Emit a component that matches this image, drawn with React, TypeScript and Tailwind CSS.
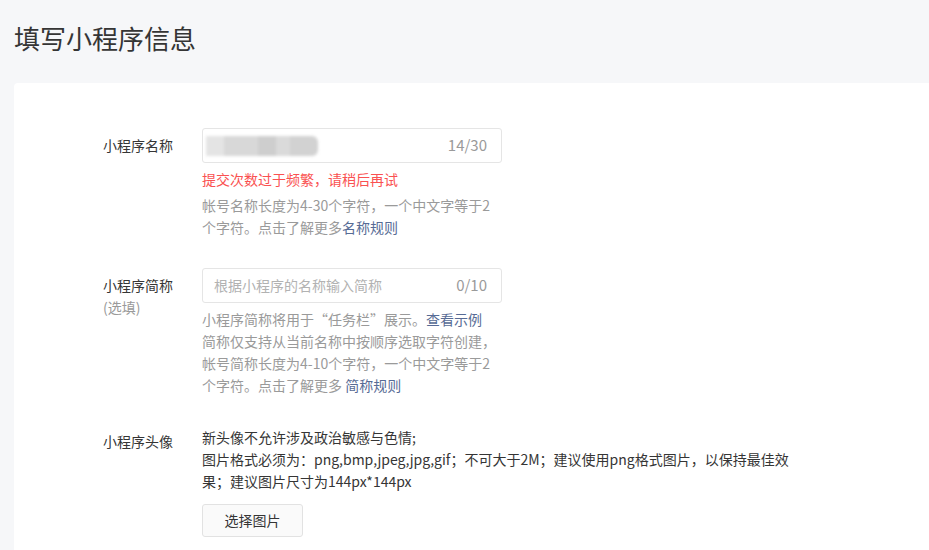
import React from "react";

const font = { fontFamily: '"Noto Sans CJK SC", "Noto Sans", sans-serif' };

const Link = ({ children }: { children: React.ReactNode }) => (
  <a className="text-[#576b95] cursor-pointer">{children}</a>
);

export default function App() {
  return (
    <div
      className="min-h-[550px] h-[550px] overflow-hidden bg-[#f6f7f9] text-[#353535]"
      style={font}
    >
      <h1 className="pl-[14px] pt-[21px] text-[26px] leading-[34px] font-normal text-[#353535]">
        填写小程序信息
      </h1>

      <div className="ml-[14px] mt-[28px] min-h-[600px] rounded-tl-[4px] bg-white pt-[45px] pl-[89px]">
        {/* 名称 */}
        <div className="flex">
          <div className="w-[99px] shrink-0 pt-[6px] text-[14px] leading-[22px]">小程序名称</div>
          <div className="w-[300px]">
            <div className="flex h-[35px] items-center justify-between rounded-[3px] border border-[#e5e5e5] pl-[3px] pr-[14px]">
              <div className="flex h-[20px] w-[112px] items-center gap-0 blur-[1.5px]">
                <div className="h-full w-[18px] bg-[#e4e4e4]" />
                <div className="h-full w-[34px] bg-[#d8d8d8]" />
                <div className="h-full w-[18px] bg-[#cecece]" />
                <div className="h-full w-[14px] bg-[#dadada]" />
                <div className="h-full w-[28px] bg-[#d2d2d2] rounded-r-[6px]" />
              </div>
              <span className="text-[15px] text-[#9a9a9a]">14/30</span>
            </div>
            <p className="mt-[5px] text-[14px] leading-[22px] text-[#fa5151]">
              提交次数过于频繁，请稍后再试
            </p>
            <p className="mt-[4px] text-[14px] leading-[22px] text-[#9a9a9a]">
              帐号名称长度为4-30个字符，一个中文字等于2个字符。点击了解更多<Link>名称规则</Link>
            </p>
          </div>
        </div>

        {/* 简称 */}
        <div className="mt-[30px] flex">
          <div className="w-[99px] shrink-0 pt-[6px] text-[14px] leading-[22px]">
            <div>小程序简称</div>
            <div className="text-[#9a9a9a]">(选填)</div>
          </div>
          <div className="w-[300px]">
            <div className="flex h-[35px] items-center justify-between rounded-[3px] border border-[#e5e5e5] pl-[11px] pr-[14px]">
              <span className="text-[14px] text-[#b2b2b2]">根据小程序的名称输入简称</span>
              <span className="text-[15px] text-[#9a9a9a]">0/10</span>
            </div>
            <p className="mt-[5px] text-[14px] leading-[22px] text-[#9a9a9a]">
              小程序简称将用于“任务栏”展示。<Link>查看示例</Link>
              <br />
              简称仅支持从当前名称中按顺序选取字符创建，帐号简称长度为4-10个字符，一个中文字等于2个字符。点击了解更多 <Link>简称规则</Link>
            </p>
          </div>
        </div>

        {/* 头像 */}
        <div className="mt-[30px] flex">
          <div className="w-[99px] shrink-0 pt-[4px] text-[14px] leading-[22px]">小程序头像</div>
          <div className="w-[600px]">
            <p className="text-[14px] leading-[22px] text-[#353535]">
              新头像不允许涉及政治敏感与色情;
              <br />
              图片格式必须为：png,bmp,jpeg,jpg,gif；不可大于2M；建议使用png格式图片，以保持最佳效果；建议图片尺寸为144px*144px
            </p>
            <button className="mt-[12px] h-[33px] w-[101px] rounded-[3px] border border-[#e2e2e2] bg-[#fafafa] text-[14px] text-[#353535]">
              选择图片
            </button>
          </div>
        </div>
      </div>
    </div>
  );
}
